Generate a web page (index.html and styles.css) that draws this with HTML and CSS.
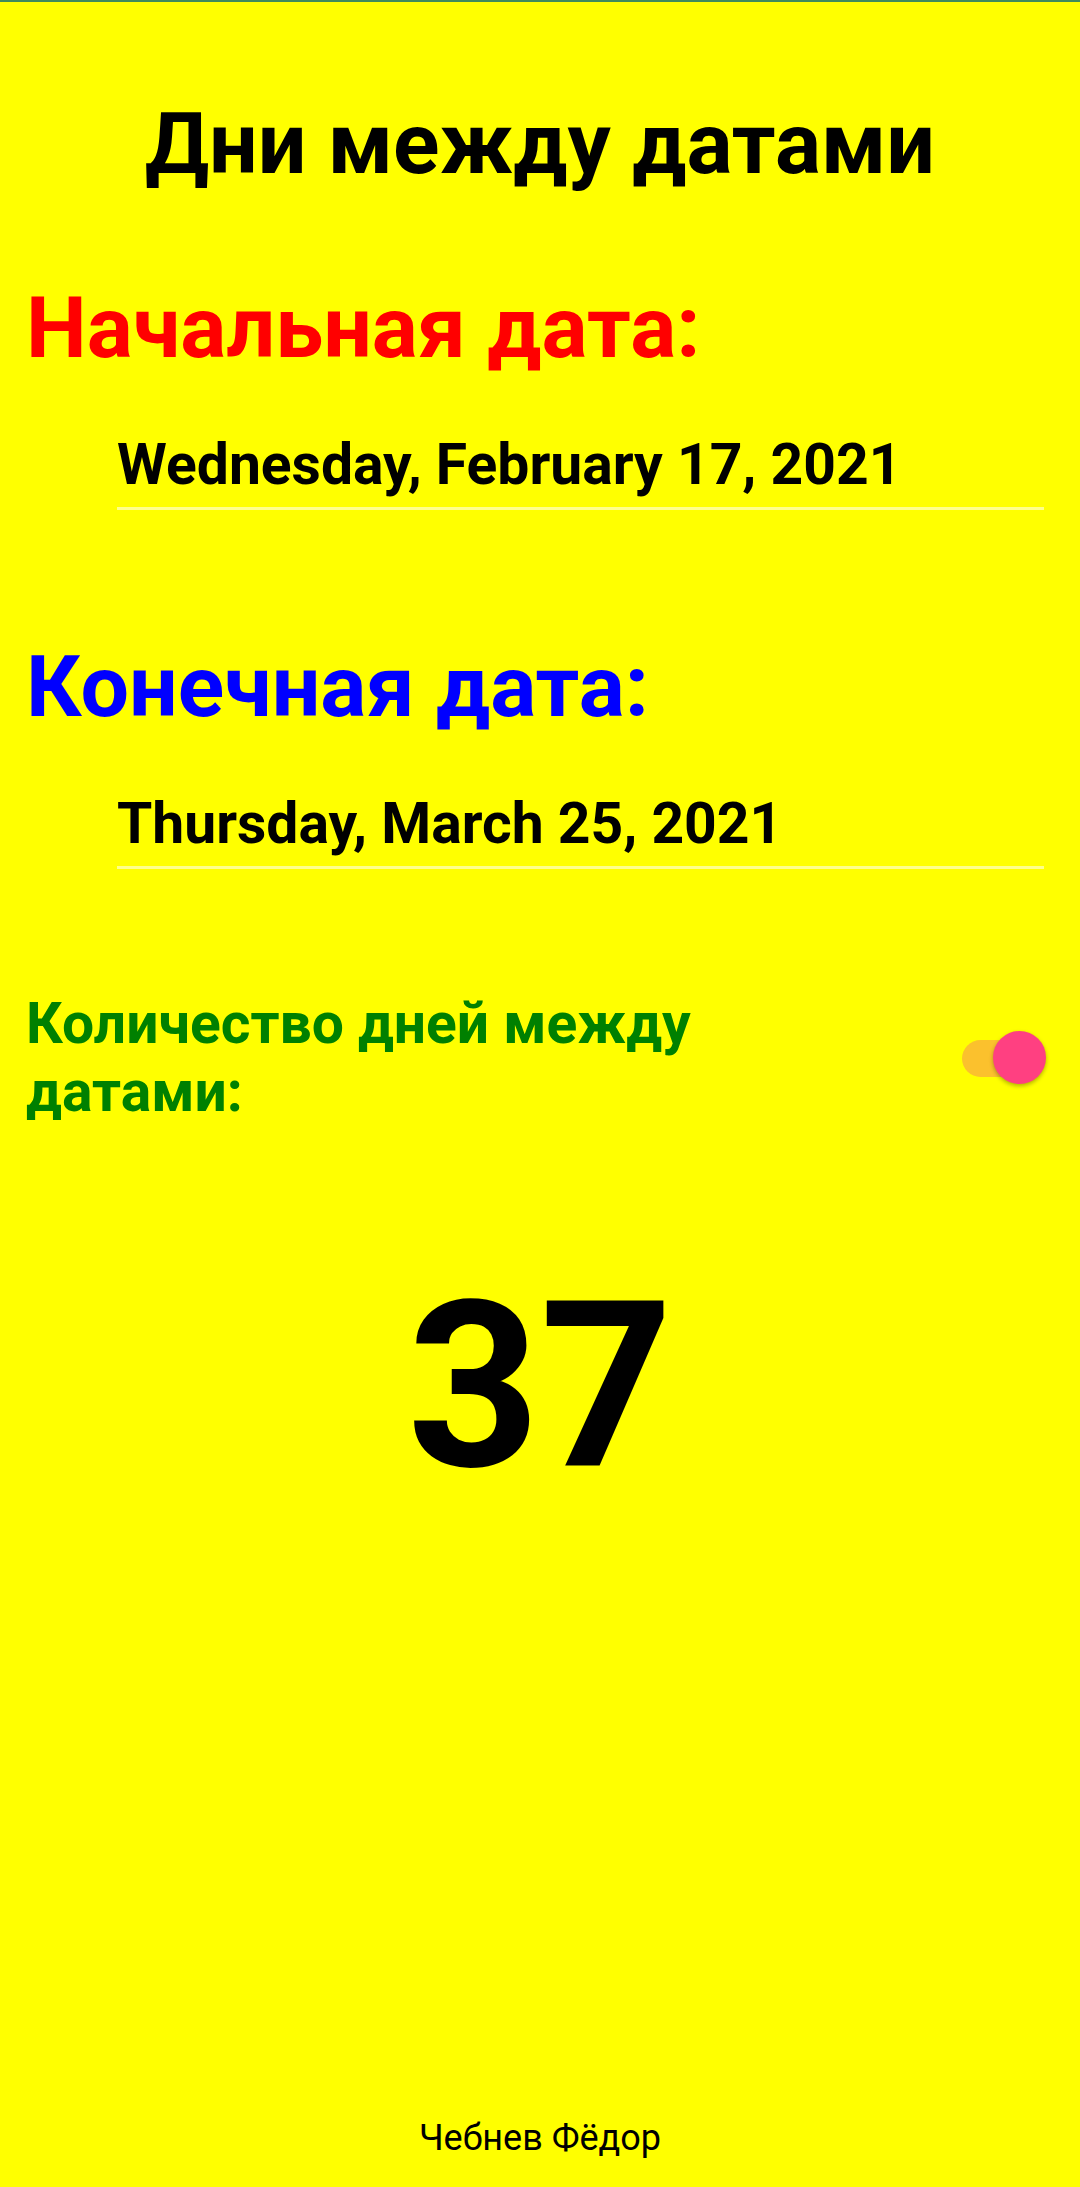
FILE: index.html
```html
<!DOCTYPE html>
<html lang="ru">
<head>
<meta charset="utf-8">
<title>Дни между датами</title>
<link rel="stylesheet" href="styles.css">
</head>
<body>
<div class="screen">
  <h1 class="title">Дни между датами</h1>
  <div class="label label-start">Начальная дата:</div>
  <div class="date-field date-start">Wednesday, February 17, 2021</div>
  <div class="label label-end">Конечная дата:</div>
  <div class="date-field">Thursday, March 25, 2021</div>
  <div class="count-row">
    <div class="count-label">Количество дней между датами:</div>
    <div class="switch"><span class="switch-track"></span><span class="switch-thumb"></span></div>
  </div>
  <div class="result">37</div>
  <div class="footer">Чебнев Фёдор</div>
</div>
</body>
</html>
```
FILE: styles.css
```css
html, body {
  margin: 0;
  padding: 0;
}
body {
  background: #ffff00;
  font-family: Roboto, "Noto Sans", "Liberation Sans", sans-serif;
  color: #000;
}
.screen {
  min-height: 2187px;
  box-sizing: border-box;
  border-top: 2px solid #3f8a5c;
  display: flex;
  flex-direction: column;
  padding-top: 92px;
}
.title {
  margin: 0;
  font-size: 86px;
  line-height: 100px;
  font-weight: 700;
  text-align: center;
}
.label {
  font-size: 86px;
  line-height: 100px;
  font-weight: 700;
  padding-left: 26px;
}
.label-start {
  color: #ff0000;
  margin-top: 84px;
}
.label-end {
  color: #0000ff;
  margin-top: 127px;
}
.date-field {
  margin: 54px 36px 0 117px;
  font-size: 57px;
  line-height: 66px;
  font-weight: 700;
  padding-bottom: 9px;
  border-bottom: 3px solid rgba(255, 255, 255, 0.55);
}
.count-row {
  margin-top: 121px;
  padding: 0 34px 0 26px;
  display: flex;
  align-items: center;
  justify-content: space-between;
}
.count-label {
  max-width: 720px;
  font-size: 57px;
  line-height: 68px;
  font-weight: 700;
  color: #008000;
}
.switch {
  position: relative;
  width: 84px;
  height: 54px;
}
.switch-track {
  position: absolute;
  left: 0;
  top: 9px;
  width: 80px;
  height: 37px;
  border-radius: 19px;
  background: #fbc12d;
}
.switch-thumb {
  position: absolute;
  right: 0;
  top: 0;
  width: 53px;
  height: 53px;
  border-radius: 50%;
  background: #ff4081;
  box-shadow: 0 2px 4px rgba(0, 0, 0, 0.3);
}
.result {
  margin-top: 131px;
  font-size: 232px;
  line-height: 260px;
  font-weight: 700;
  text-align: center;
}
.footer {
  margin-top: auto;
  padding-bottom: 28px;
  font-size: 36px;
  line-height: 42px;
  text-align: center;
}
```
